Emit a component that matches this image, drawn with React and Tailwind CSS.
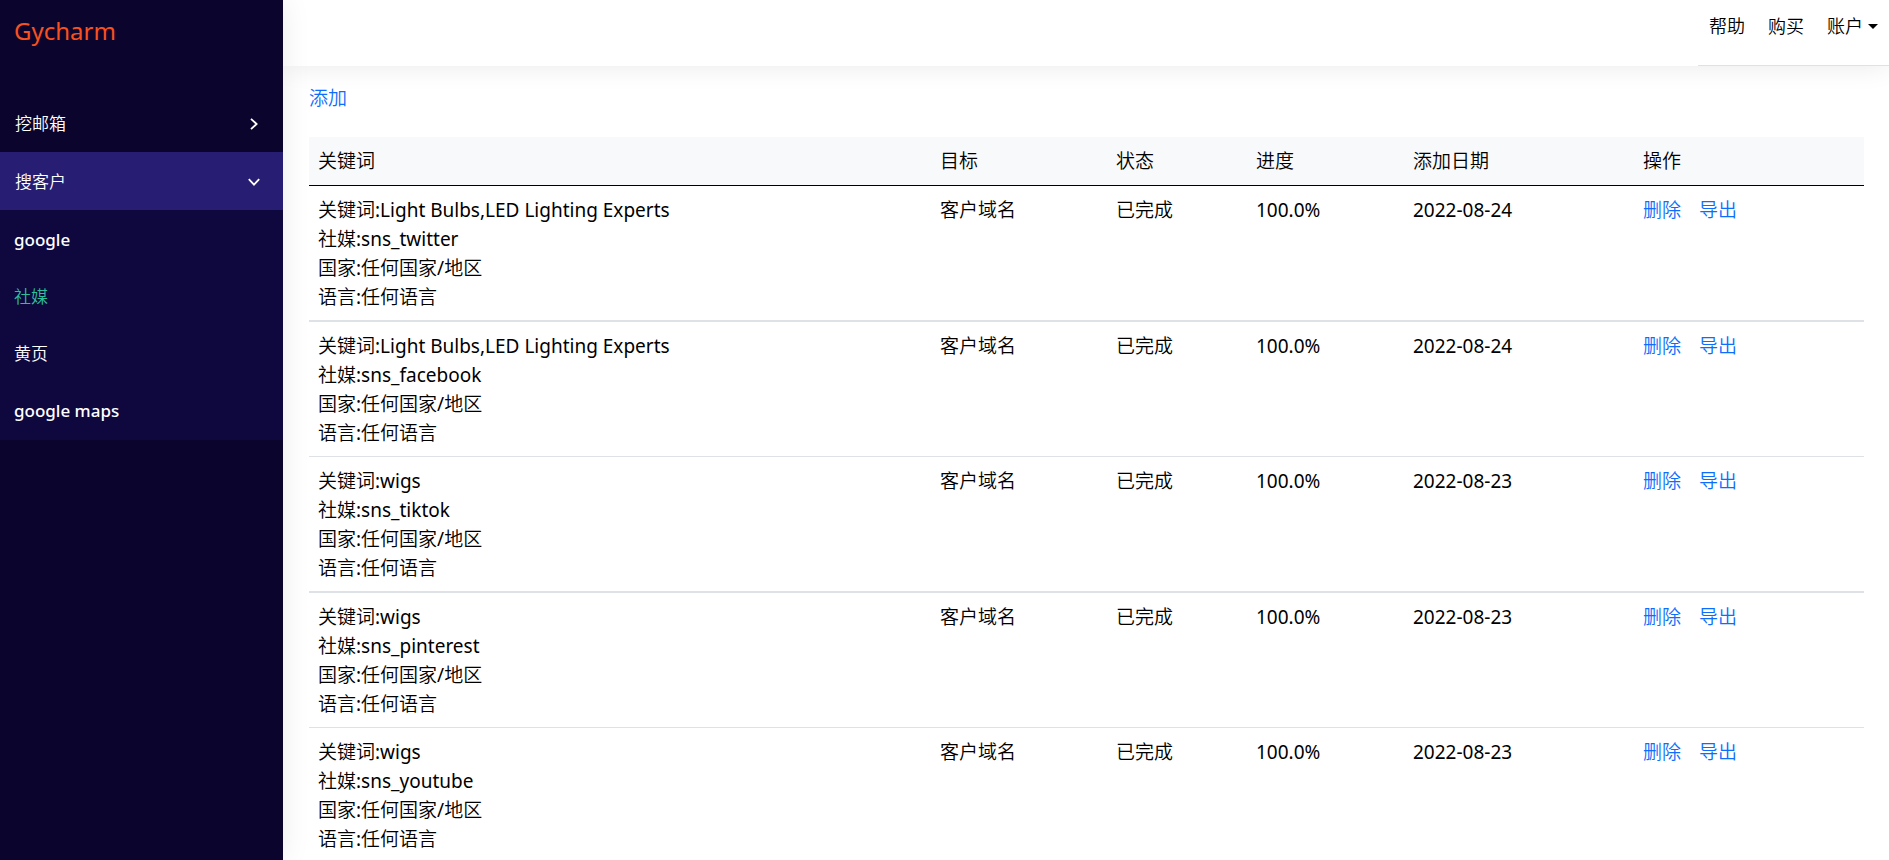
import React from "react";

const menu = [
    { label: "挖邮箱", open: false },
    { label: "搜客户", open: true },
];

const subMenu = ["google", "社媒", "黄页", "google maps"];

const columns = [
    { label: "关键词", width: "w-[40%]" },
    { label: "目标", width: "w-[176px]" },
    { label: "状态", width: "w-[140px]" },
    { label: "进度", width: "w-[157px]" },
    { label: "添加日期", width: "w-[230px]" },
    { label: "操作", width: "" },
];

const tasks = [
    {
        keyword: "Light Bulbs,LED Lighting Experts",
        media: "sns_twitter",
        date: "2022-08-24",
    },
    {
        keyword: "Light Bulbs,LED Lighting Experts",
        media: "sns_facebook",
        date: "2022-08-24",
    },
    { keyword: "wigs", media: "sns_tiktok", date: "2022-08-23" },
    { keyword: "wigs", media: "sns_pinterest", date: "2022-08-23" },
    { keyword: "wigs", media: "sns_youtube", date: "2022-08-23" },
];

function Chevron({ open }) {
    return (
        <svg
            viewBox="0 0 12 12"
            className="size-3"
            fill="none"
            stroke="currentColor"
            strokeWidth="1.8"
        >
            <path d={open ? "M0.8 3.2 L6 8.6 L11.2 3.2" : "M3 0.8 L8.6 6 L3 11.2"} />
        </svg>
    );
}

function Sidebar() {
    return (
        <aside className="z-10 w-[283px] shrink-0 bg-[#0b052d] text-[17px] font-medium text-white shadow-[0_0_28px_rgba(0,0,0,0.08)]">
            <a
                href="#"
                className="flex h-[94px] items-start px-3.5 pt-3 text-[24px] leading-[38px] font-normal text-[#f9501f]"
            >
                Gycharm
            </a>
            <nav>
                {menu.map((item) => (
                    <button
                        key={item.label}
                        type="button"
                        aria-expanded={item.open}
                        className={`flex h-[58px] w-full items-center justify-between pt-0.5 pr-[23px] pl-[15px] ${
                            item.open ? "bg-[#271d73]" : ""
                        }`}
                    >
                        {item.label}
                        <Chevron open={item.open} />
                    </button>
                ))}
                <ul className="bg-[#0e083f] py-px">
                    {subMenu.map((label) => (
                        <li key={label}>
                            <a
                                href="#"
                                className={`flex h-[57px] items-center px-3.5 ${
                                    label === "社媒" ? "text-[#2dbf9b]" : ""
                                }`}
                            >
                                {label}
                            </a>
                        </li>
                    ))}
                </ul>
            </nav>
        </aside>
    );
}

function Header() {
    return (
        <header className="flex h-[66px] justify-end shadow-[0_0_28px_rgba(0,0,0,0.09)]">
            <nav className="flex items-start gap-[23px] border-b border-[#dee2e6] px-[11px] pt-3 text-[18px] leading-[29px]">
                <a href="#">帮助</a>
                <a href="#">购买</a>
                <button type="button" className="flex items-center gap-[5px]">
                    账户
                    <svg viewBox="0 0 10 5" className="w-2.5" fill="currentColor">
                        <path d="M0 0 H10 L5 5 Z" />
                    </svg>
                </button>
            </nav>
        </header>
    );
}

function TaskTable() {
    return (
        <table className="mt-6 w-full table-fixed border-separate border-spacing-0 text-left">
            <thead className="bg-[#f8f9fb]">
                <tr>
                    {columns.map((col) => (
                        <th
                            key={col.label}
                            className={`border-b border-black px-[9px] pt-2.5 pb-[9px] font-normal ${col.width}`}
                        >
                            {col.label}
                        </th>
                    ))}
                </tr>
            </thead>
            <tbody>
                {tasks.map((task) => (
                    <tr
                        key={task.media}
                        className="align-top odd:*:border-b-2 even:*:border-b *:border-[#dee2e6] *:px-[9px] *:pt-2.5 *:pb-2"
                    >
                        <td>
                            <p>关键词:{task.keyword}</p>
                            <p>社媒:{task.media}</p>
                            <p>国家:任何国家/地区</p>
                            <p>语言:任何语言</p>
                        </td>
                        <td>客户域名</td>
                        <td>已完成</td>
                        <td>100.0%</td>
                        <td>{task.date}</td>
                        <td>
                            <div className="flex gap-[18px] text-[#0d6efd]">
                                <a href="#">删除</a>
                                <a href="#">导出</a>
                            </div>
                        </td>
                    </tr>
                ))}
            </tbody>
        </table>
    );
}

export default function App() {
    return (
        <div className="flex h-screen overflow-hidden bg-white font-['Noto_Sans','Noto_Sans_CJK_SC_DemiLight','Noto_Sans_CJK_SC_Light','Noto_Sans_CJK_SC',sans-serif] text-black">
            <Sidebar />
            <div className="min-w-0 flex-1">
                <Header />
                <main className="pt-[18px] pr-[25px] pl-[26px] text-[19px] leading-[29px]">
                    <a href="#" className="block w-fit text-[#0d6efd]">
                        添加
                    </a>
                    <TaskTable />
                </main>
            </div>
        </div>
    );
}
